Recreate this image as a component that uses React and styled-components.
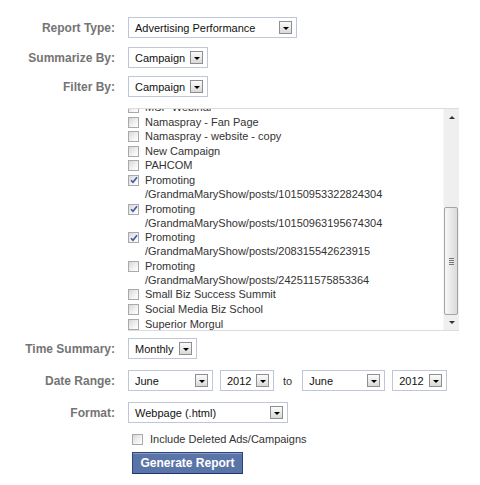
import React from "react";
import styled, { createGlobalStyle } from "styled-components";

const GlobalStyle = createGlobalStyle`
  html, body { margin: 0; padding: 0; background: #fff; }
  body {
    font-family: "Liberation Sans", Arial, sans-serif;
    font-size: 11px;
    color: #333;
  }
`;

const Form = styled.div`
  display: flex;
  flex-direction: column;
  padding-top: 17px;
`;

const Row = styled.div`
  display: flex;
  align-items: center;
  margin-top: ${(p) => p.$mt || 0}px;
  padding-left: ${(p) => p.$indent || 0}px;
`;

const Label = styled.label`
  width: 115px;
  margin-right: 13px;
  flex-shrink: 0;
  text-align: right;
  font-weight: bold;
  font-size: 12px;
  color: #747474;
`;

const SelectBox = styled.div`
  display: flex;
  align-items: center;
  justify-content: space-between;
  box-sizing: border-box;
  width: ${(p) => p.$w}px;
  height: 21px;
  border: 1px solid #bdc7d8;
  background: #fff;
  padding: 0 4px 0 6px;
  font-size: 11px;
  color: #111;
  margin-right: ${(p) => p.$mr || 0}px;
  flex-shrink: 0;
`;

const ArrowBtn = styled.span`
  display: flex;
  align-items: center;
  justify-content: center;
  box-sizing: border-box;
  width: 13px;
  height: 13px;
  border: 1px solid #8e8e8e;
  background: linear-gradient(#fbfbfb, #d9d9d9);
  &::after {
    content: "";
    border-left: 3px solid transparent;
    border-right: 3px solid transparent;
    border-top: 3px solid #000;
    margin-top: 1px;
  }
`;

const Select = ({ w, mr, children }) => (
  <SelectBox $w={w} $mr={mr}>
    <span>{children}</span>
    <ArrowBtn />
  </SelectBox>
);

const ToText = styled.span`
  font-size: 11px;
  color: #333;
  margin-right: 10px;
`;

const ListBox = styled.div`
  display: flex;
  width: 331px;
  height: 223px;
  box-sizing: border-box;
  border-top: 1px solid #dcdcdc;
  border-bottom: 1px solid #dcdcdc;
  overflow: hidden;
`;

const ListViewport = styled.div`
  flex: 1;
  overflow: hidden;
`;

const List = styled.ul`
  list-style: none;
  margin: -9px 0 0 0;
  padding: 0;
`;

const Item = styled.li`
  display: flex;
  align-items: flex-start;
  line-height: 14px;
  margin-bottom: 0.6px;
  color: #333;
  font-size: 11px;
`;

const ItemText = styled.span`
  display: flex;
  flex-direction: column;
`;

const Box = styled.span`
  display: inline-flex;
  align-items: center;
  justify-content: center;
  box-sizing: border-box;
  width: 11px;
  height: 11px;
  flex-shrink: 0;
  margin-top: ${(p) => p.$top ?? 2}px;
  margin-right: ${(p) => p.$gap ?? 6}px;
  border: 1px solid #a9a9a9;
  background: linear-gradient(135deg, #d8d8d8, #f6f6f6 70%, #fff);
`;

const Check = ({ checked, top, gap }) => (
  <Box $top={top} $gap={gap}>
    {checked && (
      <svg width="8" height="8" viewBox="0 0 8 8">
        <path d="M1 4.2 L3 6.2 L7 1.2" fill="none" stroke="#3b57a6" strokeWidth="1.6" />
      </svg>
    )}
  </Box>
);

const Scrollbar = styled.div`
  display: flex;
  flex-direction: column;
  width: 15px;
  flex-shrink: 0;
  background: #efefef;
  border-left: 1px solid #f6f6f6;
`;

const ScrollArrow = styled.div`
  height: ${(p) => p.$h}px;
  display: flex;
  align-items: center;
  justify-content: center;
  &::after {
    content: "";
    border-left: 3px solid transparent;
    border-right: 3px solid transparent;
    ${(p) => (p.$up ? "border-bottom: 3px solid #333;" : "border-top: 3px solid #333;")}
  }
`;

const Spacer = styled.div`
  flex: 1;
`;

const Thumb = styled.div`
  height: 108px;
  margin: 0 1px 0 0;
  box-sizing: border-box;
  border: 1px solid #a4a4a4;
  border-radius: 2px;
  background: linear-gradient(to right, #f7f7f7, #e6e6e6 60%, #dadada);
  display: flex;
  flex-direction: column;
  align-items: center;
  justify-content: center;
  gap: 1px;
`;

const Grip = styled.span`
  width: 5px;
  height: 1px;
  background: #777;
`;

const IncludeText = styled.span`
  font-size: 11px;
  color: #333;
  line-height: 14px;
`;

const Button = styled.button`
  box-sizing: border-box;
  width: 111px;
  height: 22px;
  padding: 0;
  background: #5b74a8;
  border: 1px solid #29447e;
  border-bottom-color: #1a356e;
  box-shadow: inset 0 1px 0 #8a9cc2;
  color: #fff;
  font-family: "Liberation Sans", Arial, sans-serif;
  font-weight: bold;
  font-size: 12px;
  cursor: pointer;
`;

const items = [
  { lines: ["MSP Webinar"] },
  { lines: ["Namaspray - Fan Page"] },
  { lines: ["Namaspray - website - copy"] },
  { lines: ["New Campaign"] },
  { lines: ["PAHCOM"] },
  { lines: ["Promoting", "/GrandmaMaryShow/posts/10150953322824304"], checked: true },
  { lines: ["Promoting", "/GrandmaMaryShow/posts/10150963195674304"], checked: true },
  { lines: ["Promoting", "/GrandmaMaryShow/posts/208315542623915"], checked: true },
  { lines: ["Promoting", "/GrandmaMaryShow/posts/242511575853364"] },
  { lines: ["Small Biz Success Summit"] },
  { lines: ["Social Media Biz School"] },
  { lines: ["Superior Morgul"] },
];

export default function App() {
  return (
    <>
      <GlobalStyle />
      <Form>
        <Row>
          <Label>Report Type:</Label>
          <Select w={169}>Advertising Performance</Select>
        </Row>
        <Row $mt={9}>
          <Label>Summarize By:</Label>
          <Select w={80}>Campaign</Select>
        </Row>
        <Row $mt={8}>
          <Label>Filter By:</Label>
          <Select w={80}>Campaign</Select>
        </Row>
        <Row $mt={11} $indent={128}>
          <ListBox>
            <ListViewport>
              <List>
                {items.map((it) => (
                  <Item key={it.lines.join(" ")}>
                    <Check checked={it.checked} />
                    <ItemText>
                      {it.lines.map((l) => (
                        <span key={l}>{l}</span>
                      ))}
                    </ItemText>
                  </Item>
                ))}
              </List>
            </ListViewport>
            <Scrollbar>
              <ScrollArrow $h={17} $up />
              <Spacer />
              <Thumb>
                <Grip />
                <Grip />
                <Grip />
                <Grip />
              </Thumb>
              <ScrollArrow $h={15} />
            </Scrollbar>
          </ListBox>
        </Row>
        <Row $mt={7}>
          <Label>Time Summary:</Label>
          <Select w={69}>Monthly</Select>
        </Row>
        <Row $mt={11}>
          <Label>Date Range:</Label>
          <Select w={85} mr={7}>June</Select>
          <Select w={54} mr={9}>2012</Select>
          <ToText>to</ToText>
          <Select w={83} mr={7}>June</Select>
          <Select w={55}>2012</Select>
        </Row>
        <Row $mt={11}>
          <Label>Format:</Label>
          <Select w={160}>Webpage (.html)</Select>
        </Row>
        <Row $mt={9} $indent={132}>
          <Check top={0} gap={7} />
          <IncludeText>Include Deleted Ads/Campaigns</IncludeText>
        </Row>
        <Row $mt={6} $indent={132}>
          <Button>Generate Report</Button>
        </Row>
      </Form>
    </>
  );
}
